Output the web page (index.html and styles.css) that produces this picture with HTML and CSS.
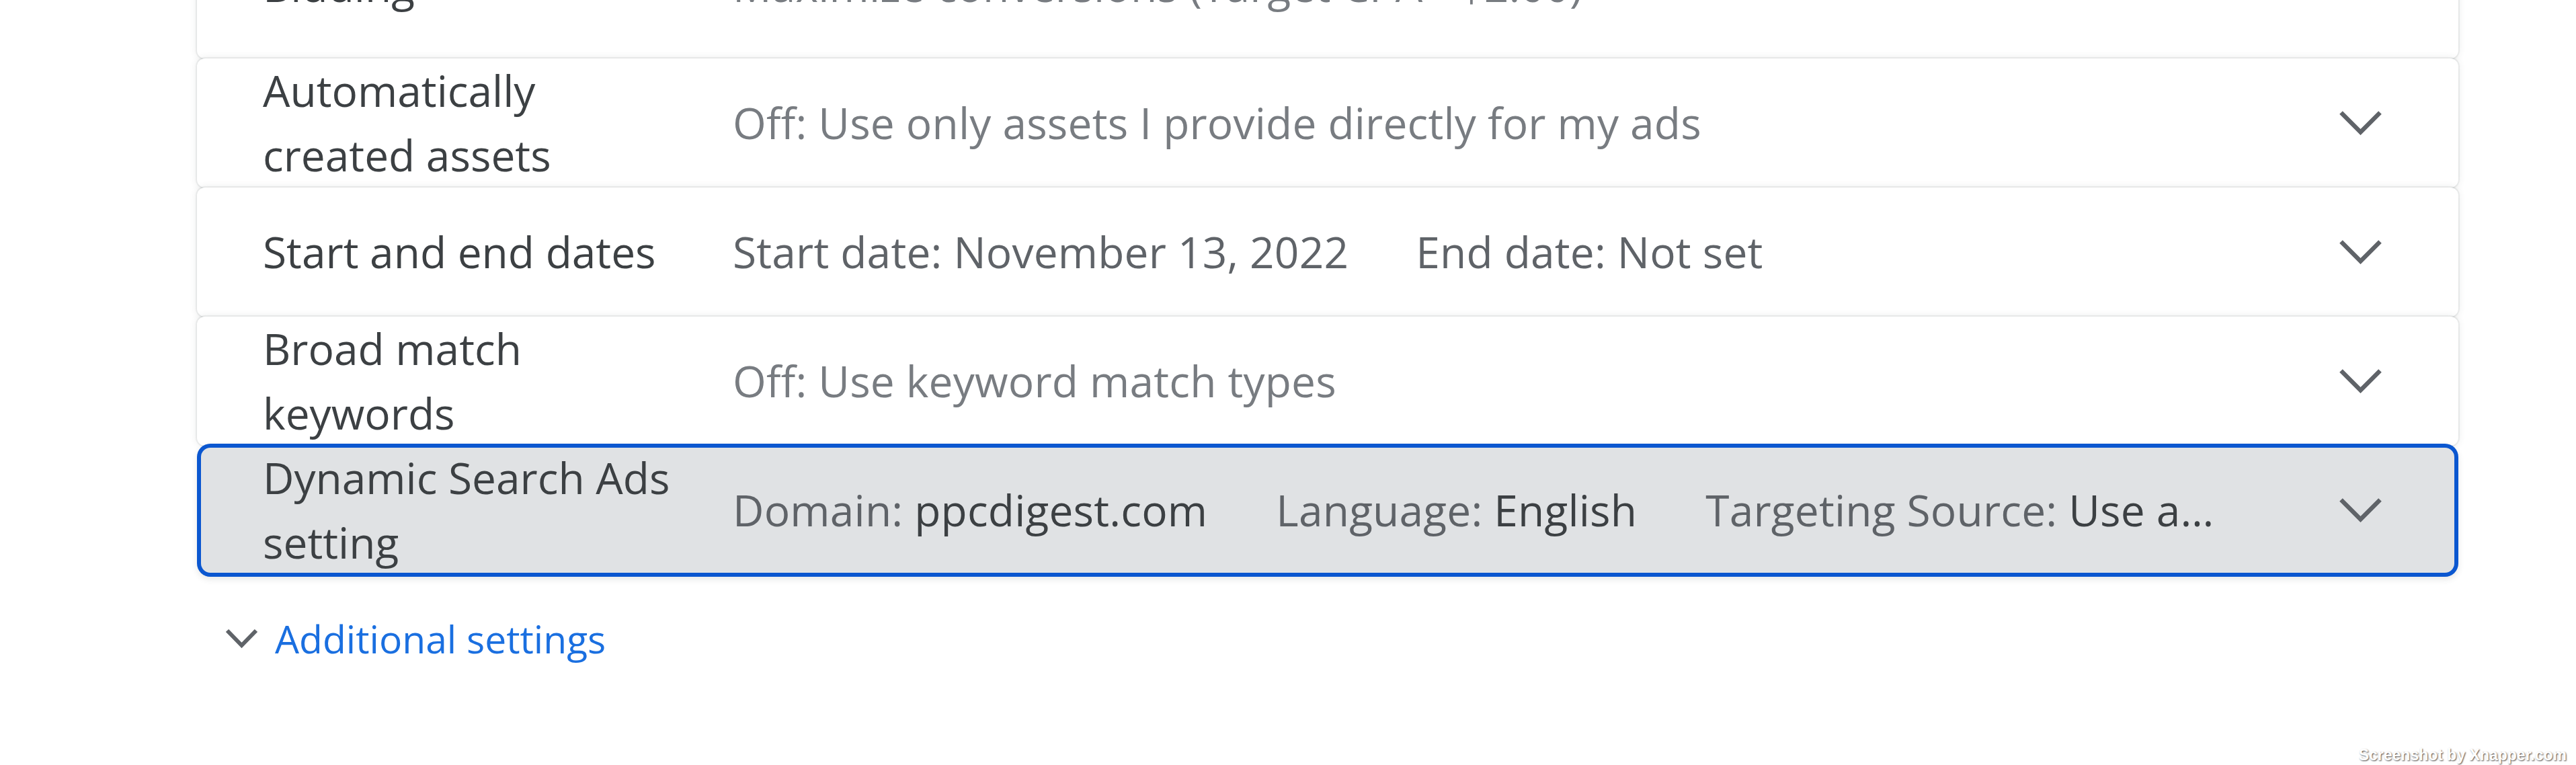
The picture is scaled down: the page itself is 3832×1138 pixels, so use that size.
FILE: index.html
```html
<!DOCTYPE html>
<html lang="en">
<head>
<meta charset="utf-8">
<title>Campaign settings</title>
<link rel="stylesheet" href="styles.css">
</head>
<body>
<div class="page">
  <div class="cards">
    <div class="row row--first">
      <div class="label">Bidding</div>
      <div class="values"><span class="item muted">Maximize conversions (Target CPA - $2.00)</span></div>
      <div class="toggle"></div>
    </div>
    <div class="row">
      <div class="label">Automatically created assets</div>
      <div class="values"><span class="item muted">Off: Use only assets I provide directly for my ads</span></div>
      <div class="toggle"><svg class="chev" viewBox="0 0 63 36" width="63" height="36"><polyline points="2.5,2.5 31.5,31.5 60.5,2.5"/></svg></div>
    </div>
    <div class="row">
      <div class="label">Start and end dates</div>
      <div class="values">
        <span class="item"><span class="key">Start date:</span> <span class="key">November 13, 2022</span></span>
        <span class="item"><span class="key">End date:</span> <span class="key">Not set</span></span>
      </div>
      <div class="toggle"><svg class="chev" viewBox="0 0 63 36" width="63" height="36"><polyline points="2.5,2.5 31.5,31.5 60.5,2.5"/></svg></div>
    </div>
    <div class="row">
      <div class="label">Broad match keywords</div>
      <div class="values"><span class="item muted">Off: Use keyword match types</span></div>
      <div class="toggle"><svg class="chev" viewBox="0 0 63 36" width="63" height="36"><polyline points="2.5,2.5 31.5,31.5 60.5,2.5"/></svg></div>
    </div>
    <div class="row row--active">
      <div class="label">Dynamic Search Ads setting</div>
      <div class="values values--clip">
        <span class="item"><span class="key">Domain:</span> <span class="val">ppcdigest.com</span></span>
        <span class="item"><span class="key">Language:</span> <span class="val">English</span></span>
        <span class="item item--clip"><span class="key">Targeting Source:</span> <span class="val">Use a Google index of my website</span></span>
      </div>
      <div class="toggle"><svg class="chev" viewBox="0 0 63 36" width="63" height="36"><polyline points="2.5,2.5 31.5,31.5 60.5,2.5"/></svg></div>
    </div>
  </div>
  <div class="more">
    <svg class="more-chev" viewBox="0 0 49 30" width="49" height="30"><polyline points="3,3 24.5,25 46,3"/></svg>
    <span class="more-text">Additional settings</span>
  </div>
</div>
<div class="watermark">Screenshot by Xnapper.com</div>
</body>
</html>
```
FILE: styles.css
```css
html, body {
  margin: 0;
  padding: 0;
  background: #ffffff;
}

body {
  font-family: "Open Sans", "Noto Sans", sans-serif;
  color: #3c4043;
  min-height: 1138px;
  overflow: hidden;
}

.page {
  padding: 0 175px 0 293px;
}

.cards {
  display: flex;
  flex-direction: column;
  margin-top: -117px;
}

.row {
  position: relative;
  display: flex;
  align-items: center;
  min-height: 192px;
  padding: 0 83px 0 98px;
  background: #ffffff;
  border-radius: 12px;
  box-shadow: 0 0 0 2px rgba(60, 64, 67, 0.07), 0 0 12px rgba(60, 64, 67, 0.12);
}

.row--first {
  padding-bottom: 12px;
}

.row--active {
  background: #e0e2e4;
  min-height: 198px;
  margin: -3px 0;
  border-radius: 20px;
  box-shadow: inset 0 0 0 6px #0b57d0, 0 4px 10px rgba(60, 64, 67, 0.12);
}

.label {
  flex: 0 0 620px;
  margin-right: 79px;
  font-size: 64px;
  line-height: 96px;
  color: #3c4043;
}

.values {
  flex: 1 1 auto;
  min-width: 0;
  display: flex;
  gap: 100px;
  margin-right: 150px;
  font-size: 64px;
  line-height: 96px;
  letter-spacing: 0.2px;
  white-space: nowrap;
}

.values--clip {
  gap: 102px;
  margin-right: 148px;
}

.item {
  flex: 0 0 auto;
}

.item--clip {
  flex: 0 1 auto;
  min-width: 0;
  overflow: hidden;
  text-overflow: ellipsis;
}

.muted {
  color: #787c81;
}

.key {
  color: #5f6368;
}

.val {
  color: #3c4043;
}

.toggle {
  flex: 0 0 126px;
  display: flex;
  justify-content: center;
  align-items: center;
}

.chev polyline {
  fill: none;
  stroke: #5f6368;
  stroke-width: 6.5;
  stroke-linecap: butt;
  stroke-linejoin: miter;
}

.more {
  display: flex;
  align-items: center;
  gap: 25px;
  margin-top: 53px;
  padding-left: 42px;
  font-size: 57px;
  line-height: 84px;
}

.more-chev polyline {
  fill: none;
  stroke: #5f6368;
  stroke-width: 6;
  stroke-linecap: butt;
  stroke-linejoin: miter;
}

.more-text {
  color: #1a6fe0;
}

.watermark {
  position: absolute;
  right: 14px;
  bottom: 2px;
  font-family: "Liberation Sans", Arial, sans-serif;
  font-weight: bold;
  font-size: 23px;
  line-height: 26px;
  color: #ffffff;
  text-shadow: 1px 1px 2px rgba(0, 0, 0, 0.7);
}
```
